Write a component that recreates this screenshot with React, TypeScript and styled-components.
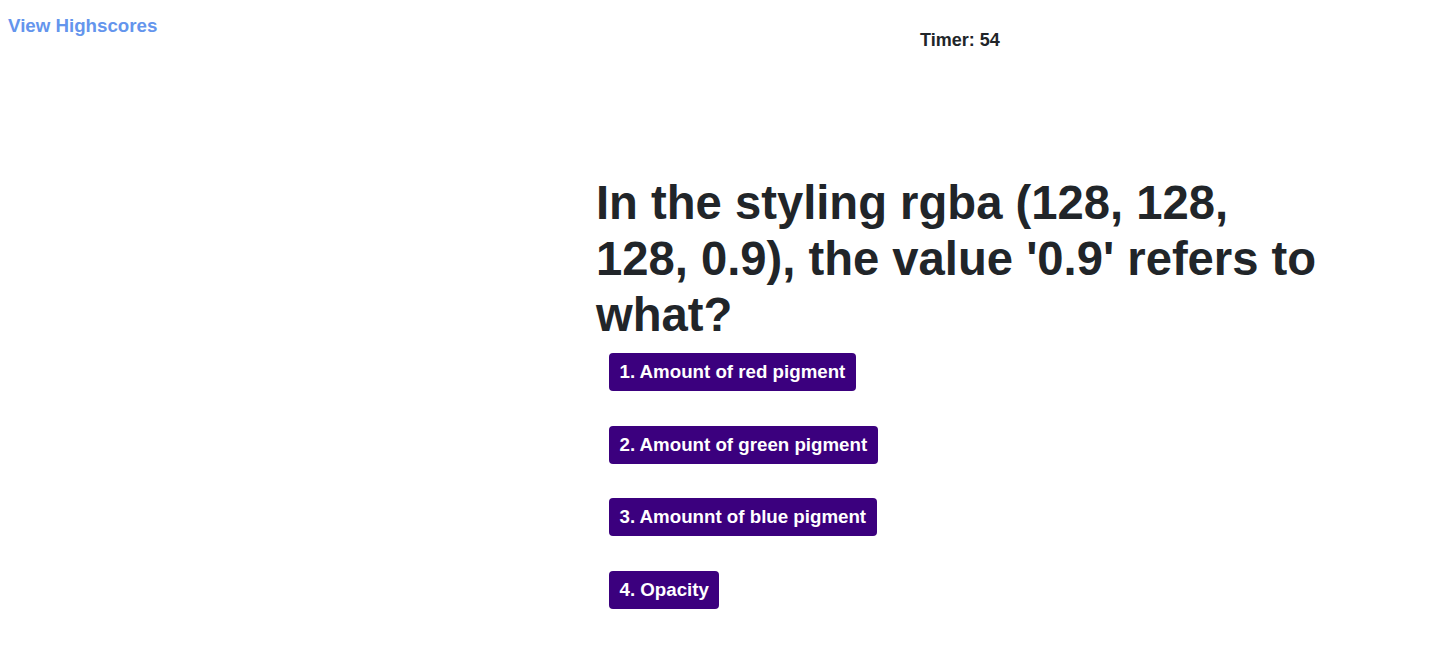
import React from 'react';
import styled, { createGlobalStyle } from 'styled-components';

const GlobalStyle = createGlobalStyle`
  body {
    margin: 0;
    background: #ffffff;
    color: #212529;
    font-family: "Liberation Sans", Arial, sans-serif;
  }
`;

const Header = styled.header`
  display: grid;
  grid-template-columns: 920px 1fr;
  height: 60px;
`;

const HighscoreLink = styled.a`
  align-self: start;
  margin: 15px 0 0 8px;
  font-size: 18.72px;
  font-weight: bold;
  color: #6495ed;
  text-decoration: none;
  cursor: pointer;
  justify-self: start;
`;

const Timer = styled.div`
  margin-top: 30px;
  font-size: 18px;
  font-weight: bold;
  color: #212529;
`;

const Quiz = styled.main`
  margin-left: 596px;
  width: 726px;
  padding-top: 115px;
`;

const Question = styled.h1`
  margin: 0 0 10px;
  font-size: 47.2px;
  line-height: 56px;
  font-weight: bold;
  color: #212529;
`;

const Choices = styled.div`
  display: flex;
  flex-direction: column;
  align-items: flex-start;
  gap: 34.7px;
  padding-left: 13px;
`;

const Choice = styled.button`
  height: 38px;
  padding: 0 10.5px;
  border: none;
  border-radius: 4px;
  background: #3b007e;
  color: #ffffff;
  font-family: "Liberation Sans", Arial, sans-serif;
  font-size: 18.72px;
  font-weight: bold;
  cursor: pointer;
`;

const answers = [
  '1. Amount of red pigment',
  '2. Amount of green pigment',
  '3. Amounnt of blue pigment',
  '4. Opacity',
];

const App = () => {
  return (
    <>
      <GlobalStyle />
      <Header>
        <HighscoreLink>View Highscores</HighscoreLink>
        <Timer>Timer: 54</Timer>
      </Header>
      <Quiz>
        <Question>In the styling rgba (128, 128, 128, 0.9), the value '0.9' refers to what?</Question>
        <Choices>
          {answers.map((a) => (
            <Choice key={a}>{a}</Choice>
          ))}
        </Choices>
      </Quiz>
    </>
  );
};

export default App;
